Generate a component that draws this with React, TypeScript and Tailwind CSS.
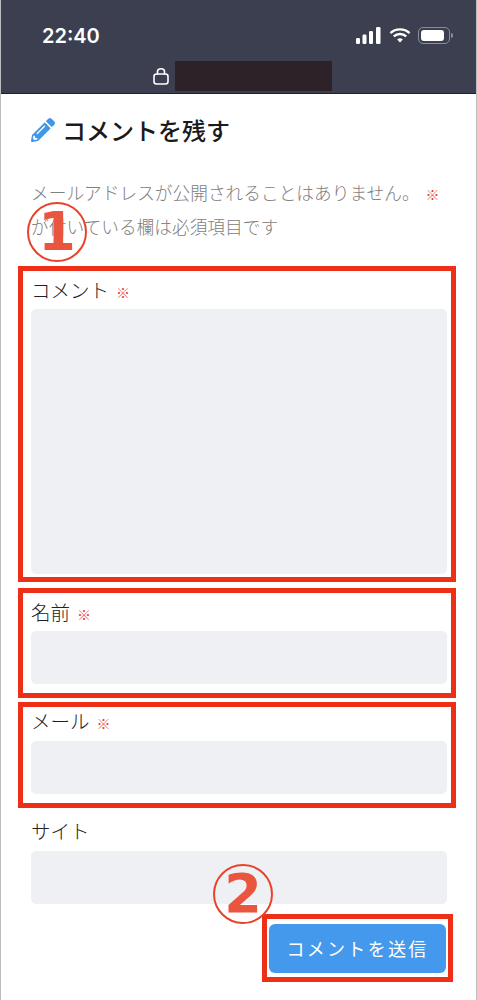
import React from 'react';
import { FaPencilAlt } from 'react-icons/fa';

const jp = "font-['Noto_Sans_CJK_JP',sans-serif]";
const inputBox = 'h-[53px] w-[416px] rounded-[5px] bg-[#eef0f4]';
const labelText = 'h-[26px] text-[19.5px] font-light leading-[26px] text-[#222222]';
const redBox = 'w-[438px] border-[5px] border-[#ee2f17] pl-[8px]';

const Req = () => <span className="ml-[7px] text-[14px] text-[#e8453c]">※</span>;

const StatusIcons = () => (
  <div className="flex items-center">
    <svg width="25" height="17" viewBox="0 0 25 17" fill="#fff">
      <rect x="0" y="11" width="4" height="6" rx="1.2" />
      <rect x="6.5" y="7.5" width="4" height="9.5" rx="1.2" />
      <rect x="13" y="4" width="4" height="13" rx="1.2" />
      <rect x="20" y="0" width="4.5" height="17" rx="1.2" />
    </svg>
    <svg className="ml-[8px]" width="22" height="17" viewBox="0 0 23 17" fill="none" stroke="#fff" strokeWidth="2.6">
      <path d="M1.5 6 C7 0.8 16 0.8 21.5 6" />
      <path d="M5 9.5 C8.6 6.2 14.4 6.2 18 9.5" />
      <path d="M8.5 12.6 L11.5 15.8 L14.5 12.6 C12.8 11 10.2 11 8.5 12.6 Z" fill="#fff" stroke="none" />
    </svg>
    <div className="ml-[7px] flex items-center gap-[1px]">
      <div className="flex h-[17px] w-[32px] items-center rounded-[5px] border border-[#8b8d98] p-[2px]">
        <div className="h-full w-[23px] rounded-[3px] bg-white" />
      </div>
      <div className="h-[5px] w-[2px] rounded-r-[2px] bg-[#8b8d98]" />
    </div>
  </div>
);

const LockIcon = () => (
  <svg width="16" height="18" viewBox="0 0 16 18" fill="none" stroke="#fff" strokeWidth="1.6">
    <path d="M4.5 7.5 V4.6 C4.5 0.8 11.5 0.8 11.5 4.6 V7.5" />
    <rect x="1" y="7" width="14" height="10" rx="2.5" />
  </svg>
);

const Callout = ({ digit, className }: { digit: string; className: string }) => (
  <div
    className={`absolute z-10 flex h-[60px] w-[60px] items-center justify-center rounded-full border-2 border-[#e8432a] font-['DejaVu_Sans',sans-serif] text-[54px] font-bold leading-none text-[#ea5540] ${className}`}
  >
    {digit}
  </div>
);

export default function App() {
  return (
    <div className={`relative h-[1000px] w-full overflow-hidden border-x border-[#bdbdbd] bg-white ${jp}`}>
      <header className="-mx-px h-[94px] border-b border-[#20202b] bg-[#3c3f4f]">
        <div className="flex h-[61px] items-center justify-between pl-[42px] pr-[24px] pt-[10px]">
          <span className="font-['Inter',sans-serif] text-[20px] font-semibold text-white">22:40</span>
          <StatusIcons />
        </div>
        <div className="flex items-center gap-[6px] pl-[153px]">
          <LockIcon />
          <div className="h-[30px] w-[157px] bg-[#2c2228]" />
        </div>
      </header>

      <main className="relative flex flex-col pl-[17px]">
        <Callout digit="1" className="left-[26px] top-[108px]" />
        <Callout digit="2" className="left-[212px] top-[770px]" />

        <h2 className="mt-[18px] flex h-[36px] items-center gap-[7px] pl-[13px] text-[24px] font-medium leading-[36px] text-[#1a1a1a]">
          <FaPencilAlt className="h-[24px] w-[24px] text-[#3f97e8]" />
          コメントを残す
        </h2>

        <p className="mt-[28px] h-[64px] pl-[13px] text-[17.7px] font-light leading-[32px] text-[#808080]">
          メールアドレスが公開されることはありません。
          <span className="ml-[6px] text-[14px] text-[#e8453c]">※</span>
          <br />
          が付いている欄は必須項目です
        </p>

        <section className={`mt-[26px] h-[316px] pt-[6px] ${redBox}`}>
          <div className={labelText}>
            コメント
            <Req />
          </div>
          <div className="mt-[6px] h-[265px] w-[416px] rounded-[5px] bg-[#eef0f4]" />
        </section>

        <section className={`mt-[6px] h-[110px] pt-[6px] ${redBox}`}>
          <div className={labelText}>
            名前
            <Req />
          </div>
          <div className={`mt-[6px] ${inputBox}`} />
        </section>

        <section className={`mt-[4px] h-[106px] pt-[1px] ${redBox}`}>
          <div className={labelText}>
            メール
            <Req />
          </div>
          <div className={`mt-[7px] ${inputBox}`} />
        </section>

        <section className="pl-[13px] pt-[10px]">
          <div className={labelText}>サイト</div>
          <div className={`mt-[7px] ${inputBox}`} />
        </section>

        <div className="ml-[244px] mt-[10px] h-[68px] w-[191px] border-[5px] border-[#ee2f17] px-[2px] pt-[5px]">
          <button className="h-[49px] w-full rounded-[6px] bg-[#4499ec] text-[18px] tracking-[2.3px] text-white">
            コメントを送信
          </button>
        </div>
      </main>
    </div>
  );
}
